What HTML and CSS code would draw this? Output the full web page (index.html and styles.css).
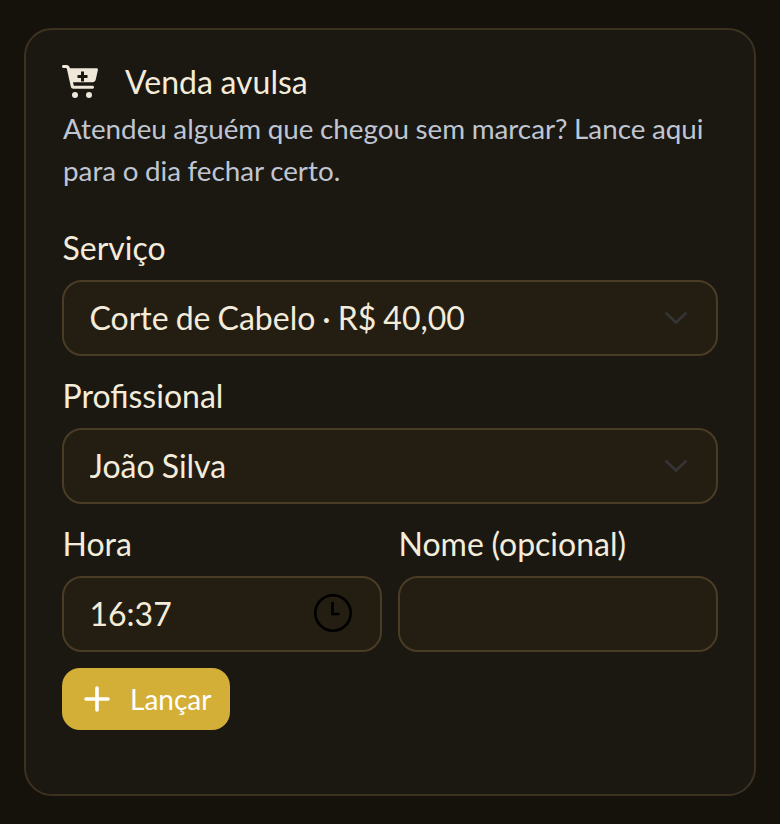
FILE: index.html
```html
<!DOCTYPE html>
<html lang="pt-BR">
<head>
<meta charset="utf-8">
<title>Venda avulsa</title>
<link rel="stylesheet" href="styles.css">
</head>
<body>
<section class="card">
  <h2 class="title">
    <svg class="cart" viewBox="0 0 36 34" aria-hidden="true">
      <path fill="#efe8d8" fill-rule="evenodd" d="M1.500 0H4.500C6.200 0 7.300 .9 7.700 2.400L7.900 3.200H34.500C35.600 3.200 36.100 4 35.900 5L33.700 14.800C33.300 16.400 32.200 17.200 30.700 17.200H11L11.800 20.800H30.500C31.400 20.800 32 21.400 32 22.200S31.400 23.800 30.500 23.800H11.500C10 23.800 9.100 23 8.800 21.600L4.900 3.900C4.700 3.200 4.400 3 3.800 3H1.500C.6 3 0 2.300 0 1.500S.6 0 1.500 0ZM19 6.500V10H15.500V13H19V16.500H22V13H25.500V10H22V6.500Z"/>
      <circle fill="#efe8d8" cx="13" cy="30" r="3"/>
      <circle fill="#efe8d8" cx="27" cy="30" r="3"/>
    </svg>
    <span>Venda avulsa</span>
  </h2>
  <p class="lead">Atendeu alguém que chegou sem marcar? Lance aqui para o dia fechar certo.</p>
  <form class="form">
    <div class="field">
      <label class="label" for="servico">Serviço</label>
      <div class="control">
        <select class="input" id="servico"><option>Corte de Cabelo · R$ 40,00</option></select>
        <svg class="chevron" viewBox="0 0 24 14" aria-hidden="true"><path d="M2.500 2.500 12 11.500 21.500 2.500"/></svg>
      </div>
    </div>
    <div class="field">
      <label class="label" for="profissional">Profissional</label>
      <div class="control">
        <select class="input" id="profissional"><option>João Silva</option></select>
        <svg class="chevron" viewBox="0 0 24 14" aria-hidden="true"><path d="M2.500 2.500 12 11.500 21.500 2.500"/></svg>
      </div>
    </div>
    <div class="row">
      <div class="field">
        <label class="label" for="hora">Hora</label>
        <div class="control">
          <input class="input" id="hora" type="text" value="16:37">
          <svg class="clock" viewBox="0 0 38 38" aria-hidden="true"><circle cx="19" cy="19" r="17.700"/><path d="M18.500 8V20H25.500"/></svg>
        </div>
      </div>
      <div class="field">
        <label class="label" for="nome">Nome (opcional)</label>
        <div class="control"><input class="input" id="nome" type="text"></div>
      </div>
    </div>
    <button class="submit" type="button">
      <svg class="plus" viewBox="0 0 26 26" aria-hidden="true"><path d="M13 2V24M2 13H24"/></svg>
      <span>Lançar</span>
    </button>
  </form>
</section>
</body>
</html>
```
FILE: styles.css
```css
* { box-sizing: border-box; }
html, body { margin: 0; height: 100%; }
body {
  background: #15110b;
  padding: 28px 24px;
  font-family: Lato, "Liberation Sans", sans-serif;
  word-spacing: -0.036em;
  color: #f2ead8;
}
.card {
  height: 768px;
  background: #1b1711;
  border: 2px solid #3c3222;
  border-radius: 28px;
  padding: 34px 36px;
}
.title {
  display: flex;
  align-items: center;
  gap: 27px;
  margin: 0;
  font-size: 32px;
  font-weight: 400;
  line-height: 36px;
  color: #f4ecdb;
}
.cart { width: 36px; height: 34px; flex: none; }
.lead {
  margin: 8px 0 0;
  padding-left: 1px;
  font-size: 27.800px;
  line-height: 42px;
  color: #bfc6d2;
}
.form { display: flex; flex-direction: column; gap: 16px; margin-top: 32px; }
.field { display: flex; flex-direction: column; gap: 8px; min-width: 0; }
.label { padding-left: .5px; font-size: 32px; line-height: 48px; color: #f4ecdb; }
.control { position: relative; }
.input {
  display: block;
  width: 100%;
  height: 76px;
  padding: 0 26px 2px 25.500px;
  background: #241d12;
  border: 2px solid #4a3d25;
  border-radius: 20px;
  color: #f4ecdb;
  font: 400 32px Lato, "Liberation Sans", sans-serif;
  word-spacing: -0.036em;
  appearance: none;
  outline: none;
}
.chevron {
  position: absolute;
  right: 30px;
  top: 31px;
  width: 24px;
  height: 14px;
  fill: none;
  stroke: #343434;
  stroke-width: 3;
  stroke-linecap: round;
  stroke-linejoin: round;
}
.clock {
  position: absolute;
  right: 30px;
  top: 18px;
  width: 38px;
  height: 38px;
  fill: none;
  stroke: #000;
  stroke-width: 2.600;
}
.row { display: grid; grid-template-columns: 1fr 1fr; gap: 16px; }
.submit {
  display: inline-flex;
  align-items: center;
  align-self: flex-start;
  gap: 20px;
  width: 168px;
  height: 62px;
  padding: 0 18px 0 22px;
  background: #d4af37;
  border: 0;
  border-radius: 18px;
  color: #fff;
  font: 400 28px Lato, "Liberation Sans", sans-serif;
}
.plus {
  width: 26px;
  height: 26px;
  fill: none;
  stroke: #fff;
  stroke-width: 3.600;
  stroke-linecap: round;
}
```
